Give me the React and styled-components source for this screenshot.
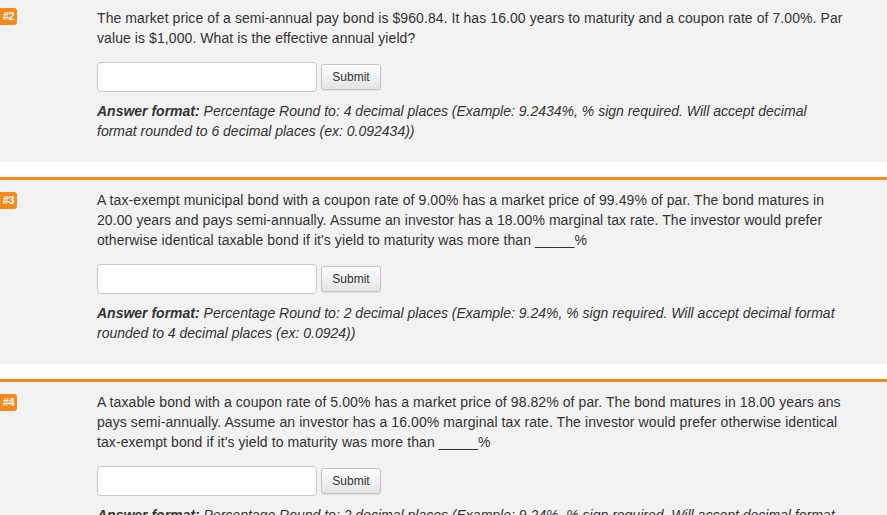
import React from "react";
import styled, { createGlobalStyle } from "styled-components";

const Global = createGlobalStyle`
  html, body { margin: 0; padding: 0; background: #fff; }
  body { font-family: "Liberation Sans", Arial, Helvetica, sans-serif; color: #333; }
`;

const Page = styled.div`
  display: flex;
  flex-direction: column;
  gap: 15px;
  margin-top: -2px;
`;

const Question = styled.section`
  display: grid;
  grid-template-columns: 97px 1fr;
  background: #f2f2f2;
  border-top: ${(p) => (p.$first ? "none" : "3px solid #f68a1e")};
  padding: 10px 40px 21px 0;
`;

const Badge = styled.div`
  align-self: start;
  justify-self: start;
  margin-top: ${(p) => (p.$first ? "0px" : "2px")};
  width: 17px;
  height: 17px;
  border-radius: 0 3px 3px 0;
  background: #f68a1e;
  color: #fff;
  font-weight: bold;
  font-size: 11px;
  line-height: 17px;
  text-align: center;
  letter-spacing: -0.3px;
`;

const Body = styled.div`
  display: flex;
  flex-direction: column;
  min-width: 0;
`;

const Text = styled.p`
  margin: 0;
  font-size: 14px;
  line-height: 20px;
  letter-spacing: 0.08px;
`;

const Form = styled.div`
  display: flex;
  align-items: center;
  gap: 4px;
  margin: 14px 0 9px;
`;

const Input = styled.input`
  box-sizing: border-box;
  width: 220px;
  height: 30px;
  border: 1px solid #c8c8c8;
  border-radius: 4px;
  background: #fff;
  outline: none;
  padding: 4px 6px;
`;

const Button = styled.button`
  box-sizing: border-box;
  width: 60px;
  height: 26px;
  border: 1px solid #c4c4c4;
  border-radius: 3px;
  background: linear-gradient(#fdfdfd, #e4e4e4);
  color: #333;
  font-family: "Liberation Sans", Arial, sans-serif;
  font-size: 12px;
  padding: 0;
  box-shadow: 0 1px 1px rgba(0, 0, 0, 0.08);
`;

const Format = styled.p`
  margin: 0;
  font-size: 14px;
  line-height: 20px;
  font-style: italic;
  & b { font-weight: bold; }
`;

const questions = [
  {
    n: "#2",
    text: "The market price of a semi-annual pay bond is $960.84. It has 16.00 years to maturity and a coupon rate of 7.00%. Par value is $1,000. What is the effective annual yield?",
    format:
      "Percentage Round to: 4 decimal places (Example: 9.2434%, % sign required. Will accept decimal format rounded to 6 decimal places (ex: 0.092434))",
  },
  {
    n: "#3",
    text: "A tax-exempt municipal bond with a coupon rate of 9.00% has a market price of 99.49% of par. The bond matures in 20.00 years and pays semi-annually. Assume an investor has a 18.00% marginal tax rate. The investor would prefer otherwise identical taxable bond if it's yield to maturity was more than _____%",
    format:
      "Percentage Round to: 2 decimal places (Example: 9.24%, % sign required. Will accept decimal format rounded to 4 decimal places (ex: 0.0924))",
  },
  {
    n: "#4",
    text: "A taxable bond with a coupon rate of 5.00% has a market price of 98.82% of par. The bond matures in 18.00 years ans pays semi-annually. Assume an investor has a 16.00% marginal tax rate. The investor would prefer otherwise identical tax-exempt bond if it's yield to maturity was more than _____%",
    format:
      "Percentage Round to: 2 decimal places (Example: 9.24%, % sign required. Will accept decimal format rounded to 4 decimal places (ex: 0.0924))",
  },
];

export default function App() {
  return (
    <>
      <Global />
      <Page>
        {questions.map((q, i) => (
          <Question key={q.n} $first={i === 0}>
            <Badge $first={i === 0}>{q.n}</Badge>
            <Body>
              <Text>{q.text}</Text>
              <Form>
                <Input type="text" />
                <Button type="button">Submit</Button>
              </Form>
              <Format>
                <b>Answer format:</b> {q.format}
              </Format>
            </Body>
          </Question>
        ))}
      </Page>
    </>
  );
}
